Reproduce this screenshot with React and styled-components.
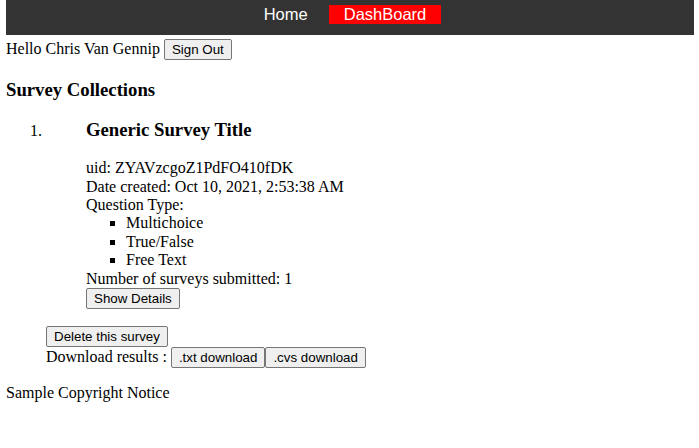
import styled, { createGlobalStyle } from "styled-components";

const GlobalStyle = createGlobalStyle`
  body {
    margin: 0 5px 0 6px;
    font-family: "Liberation Serif", "Times New Roman", serif;
    font-size: 16px;
    line-height: 1.15;
    color: #000;
    background: #fff;
  }
`;

const questionTypes = ["Multichoice", "True/False", "Free Text"];

export default function App() {
  return (
    <>
      <GlobalStyle />
      <NavBar>
        <NavLink href="#">Home</NavLink>
        <NavLink href="#" $active>
          DashBoard
        </NavLink>
      </NavBar>

      <Greeting>
        Hello Chris Van Gennip <Button>Sign Out</Button>
      </Greeting>

      <SectionTitle>Survey Collections</SectionTitle>

      <SurveyList>
        <SurveyItem>
          <SurveyBody>
            <SectionTitle>Generic Survey Title</SectionTitle>
            <MetaLine>uid: ZYAVzcgoZ1PdFO410fDK</MetaLine>
            <MetaLine>Date created: Oct 10, 2021, 2:53:38 AM</MetaLine>
            <MetaLine>Question Type:</MetaLine>
            <TypeList>
              {questionTypes.map((t) => (
                <li key={t}>{t}</li>
              ))}
            </TypeList>
            <MetaLine>Number of surveys submitted: 1</MetaLine>
            <Button>Show Details</Button>
          </SurveyBody>

          <Actions>
            <div>
              <Button>Delete this survey</Button>
            </div>
            <div>
              Download results : <Button>.txt download</Button>
              <Button>.cvs download</Button>
            </div>
          </Actions>
        </SurveyItem>
      </SurveyList>

      <Footer>Sample Copyright Notice</Footer>
    </>
  );
}

const NavBar = styled.nav`
  display: flex;
  justify-content: center;
  gap: 6px;
  background-color: #333333;
  padding: 5px 10px 11px 0;
`;

const NavLink = styled.a`
  font-family: "Liberation Sans", Arial, sans-serif;
  font-size: 16.5px;
  line-height: 19px;
  padding: 0 15px;
  color: #ffffff;
  text-decoration: none;
  background-color: ${(p) => (p.$active ? "#ff0000" : "transparent")};
`;

const Greeting = styled.div`
  margin-top: 4px;
`;

const Button = styled.button`
  font-family: "Liberation Sans", Arial, sans-serif;
  font-size: 13.333px;
  line-height: 15px;
  color: #000;
  background-color: #efefef;
  border: 1px solid #767676;
  border-radius: 2px;
  padding: 2px 7px;
  margin: 0;
`;

const SectionTitle = styled.h3`
  font-size: 18.72px;
  font-weight: bold;
  margin: 18.72px 0;
`;

const SurveyList = styled.ol`
  margin: 16px 0;
  padding-left: 40px;
`;

const SurveyItem = styled.li``;

const SurveyBody = styled.div`
  padding-left: 40px;
  margin-bottom: 17px;
`;

const MetaLine = styled.div``;

const TypeList = styled.ul`
  list-style: square;
  margin: 0;
  padding-left: 40px;
`;

const Actions = styled.div``;

const Footer = styled.div`
  margin-top: 1px;
`;
